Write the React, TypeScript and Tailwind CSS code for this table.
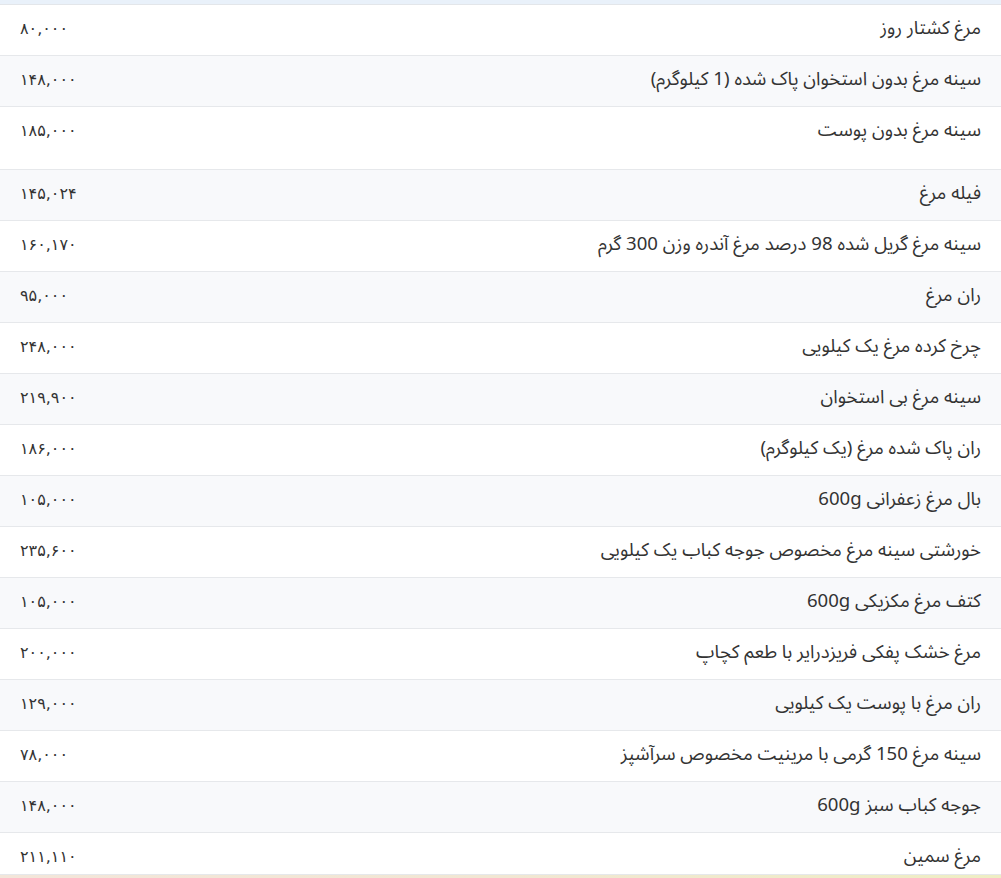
import React from "react";

const rows: [string, string][] = [
  ["مرغ کشتار روز", "۸۰,۰۰۰"],
  ["سینه مرغ بدون استخوان پاک شده (1 کیلوگرم)", "۱۴۸,۰۰۰"],
  ["سینه مرغ بدون پوست", "۱۸۵,۰۰۰"],
  ["فیله مرغ", "۱۴۵,۰۲۴"],
  ["سینه مرغ گریل شده 98 درصد مرغ آندره وزن 300 گرم", "۱۶۰,۱۷۰"],
  ["ران مرغ", "۹۵,۰۰۰"],
  ["چرخ کرده مرغ یک کیلویی", "۲۴۸,۰۰۰"],
  ["سینه مرغ بی استخوان", "۲۱۹,۹۰۰"],
  ["ران پاک شده مرغ (یک کیلوگرم)", "۱۸۶,۰۰۰"],
  ["بال مرغ زعفرانی 600g", "۱۰۵,۰۰۰"],
  ["خورشتی سینه مرغ مخصوص جوجه کباب یک کیلویی", "۲۳۵,۶۰۰"],
  ["کتف مرغ مکزیکی 600g", "۱۰۵,۰۰۰"],
  ["مرغ خشک پفکی فریزدرایر با طعم کچاپ", "۲۰۰,۰۰۰"],
  ["ران مرغ با پوست یک کیلویی", "۱۲۹,۰۰۰"],
  ["سینه مرغ 150 گرمی با مرینیت مخصوص سرآشپز", "۷۸,۰۰۰"],
  ["جوجه کباب سبز 600g", "۱۴۸,۰۰۰"],
  ["مرغ سمین", "۲۱۱,۱۱۰"],
];

export default function App() {
  return (
    <div
      className="w-[1001px] h-[878px] overflow-hidden bg-white text-[#333]"
      style={{ fontFamily: '"Noto Sans", "Noto Sans Arabic", "DejaVu Sans", sans-serif' }}
    >
      <div className="h-[5px] bg-[#e9f1fa] border-b border-[#e3e6ea]" />
      <div dir="rtl">
        {rows.map(([name, price], i) => (
          <div
            key={i}
            className={`flex justify-between items-start border-b border-[#e6e8eb] px-[20px] pt-[9px] ${
              i === 2 ? "h-[63px]" : i === rows.length - 1 ? "h-[42px]" : "h-[51px]"
            } ${i % 2 === 1 ? "bg-[#f8f9fb]" : "bg-white"}`}
          >
            <span className="text-[18.6px] leading-[26px]">{name}</span>
            <span
              className="text-[16px] leading-[26px] mt-[2px]"
              style={{ fontFamily: '"DejaVu Sans", sans-serif' }}
            >
              {price}
            </span>
          </div>
        ))}
      </div>
      <div className="h-[10px] bg-gradient-to-r from-[#f3e6da] via-[#f1e7d3] to-[#eeeec4]" />
    </div>
  );
}
